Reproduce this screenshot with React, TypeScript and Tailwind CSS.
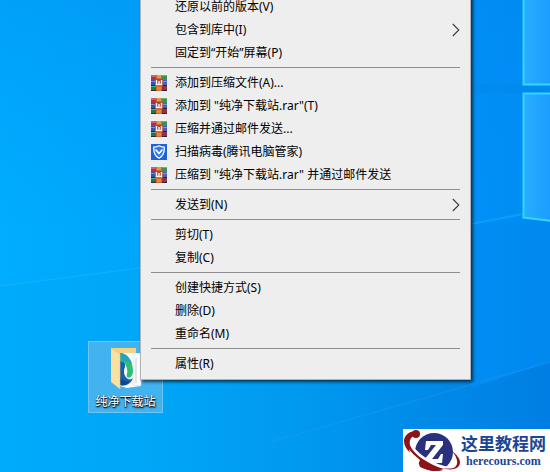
import type { ReactNode } from "react";

function RarIcon() {
  return (
    <svg viewBox="0 0 16 16" className="h-4 w-4" aria-hidden="true">
      <rect width="16" height="16" fill="#2f2438" />
      <rect width="8" height="5" fill="#b32f45" />
      <rect x="8" width="8" height="5" fill="#3f8f52" />
      <rect width="8" height="2" fill="#cf6072" />
      <rect x="8" width="8" height="1" fill="#6fb27c" />
      <rect y="5" width="8" height="5" fill="#3a4fae" />
      <rect x="8" y="5" width="8" height="5" fill="#4a5fc6" />
      <rect y="6" width="16" height="1" fill="#7d8edb" />
      <rect y="11" width="8" height="4" fill="#1f7a45" />
      <rect x="8" y="11" width="8" height="4" fill="#8e3440" />
      <rect y="11" width="5" height="1" fill="#5cae78" />
      <rect x="5" width="6" height="16" fill="#cf6630" />
      <rect x="6" width="4" height="3" fill="#e59a48" />
      <rect x="6" y="12" width="4" height="3" fill="#e08a3c" />
      <rect x="4" y="4" width="8" height="7" fill="#a8483f" />
      <path d="M5.500 5v4.500h5V5M8 6v3" fill="none" stroke="#fff3ea" strokeWidth="1.400" />
    </svg>
  );
}

function ShieldIcon() {
  return (
    <svg viewBox="0 0 16 16" className="h-4 w-4" aria-hidden="true">
      <rect width="16" height="16" fill="#1d62db" />
      <path
        d="M8 1.700c1.600 1 3.400 1.400 5.300 1.500.3 5-.9 8.600-5.300 11.100C3.600 11.800 2.400 8.200 2.700 3.200 4.600 3.100 6.400 2.700 8 1.700z"
        fill="#2d78ee"
        stroke="#fff"
        strokeWidth="1.300"
      />
      <path d="M4.500 5.500l3.500 4 3.500-4" fill="none" stroke="#fff" strokeWidth="1.700" />
    </svg>
  );
}

function Chevron() {
  return (
    <svg viewBox="0 0 8 14" className="ml-auto h-3.5 w-2" fill="none" stroke="#3c3c3c" aria-hidden="true">
      <path d="M.8 1l6 6-6 6" strokeWidth="1.100" />
    </svg>
  );
}

function Item({ label, icon, submenu = false }: { label: string; icon?: ReactNode; submenu?: boolean }) {
  return (
    <button
      type="button"
      role="menuitem"
      aria-haspopup={submenu ? "menu" : undefined}
      className="flex h-[23px] w-full items-center text-left hover:bg-white"
    >
      <span className="w-6 shrink-0">{icon}</span>
      <span className="whitespace-pre">{label}</span>
      {submenu && <Chevron />}
    </button>
  );
}

function Separator() {
  return <div role="separator" className="my-[3px] h-px bg-[#8f8f8f]" />;
}

function Wallpaper() {
  return (
    <svg viewBox="0 0 550 472" preserveAspectRatio="xMaxYMin slice" className="absolute inset-0 h-full w-full" aria-hidden="true">
      <defs>
        <linearGradient id="sky" x1="0" y1="0" x2="1" y2="0">
          <stop offset="0" stopColor="#00adfe" />
          <stop offset=".28" stopColor="#00a5fa" />
          <stop offset=".9" stopColor="#008ff6" />
          <stop offset="1" stopColor="#008cf3" />
        </linearGradient>
        <linearGradient id="top" x1="0" y1="0" x2="0" y2="1">
          <stop offset="0" stopColor="#0084ee" stopOpacity=".3" />
          <stop offset=".5" stopColor="#0090f8" stopOpacity="0" />
        </linearGradient>
        <linearGradient id="ground" x1="0" y1="0" x2="1" y2="0">
          <stop offset="0" stopColor="#00abfb" />
          <stop offset=".3" stopColor="#00a5f6" />
          <stop offset=".55" stopColor="#0099f0" />
          <stop offset=".8" stopColor="#0089e8" />
          <stop offset="1" stopColor="#007ee3" />
        </linearGradient>
        <linearGradient id="pane" x1="0" y1="0" x2="1" y2="0">
          <stop offset="0" stopColor="#29adff" />
          <stop offset="1" stopColor="#1a9cff" />
        </linearGradient>
      </defs>
      <rect width="550" height="472" fill="url(#sky)" />
      <rect width="550" height="472" fill="url(#top)" />
      <path d="M0 286L140 268" stroke="#2fbdff" opacity=".45" />
      <path d="M471 224L523 214" stroke="#2db4ff" strokeWidth="2" opacity=".35" />
      <path d="M471 225L550 218V362L471 388z" fill="#0088ec" opacity=".35" />
      <path d="M0 472V287L140 269V380H471V388L550 362V472z" fill="url(#ground)" />
      <path d="M270 442L400 405 550 362" fill="none" stroke="#2a9cf2" opacity=".45" />
      <rect x="471" y="84" width="79" height="9" fill="#0088ed" opacity=".6" />
      <path d="M523.500-2V84.500H552V-2z" fill="url(#pane)" stroke="#35d5fa" strokeWidth="2" />
      <path d="M523.500 93.500H552V221L523.500 217.500z" fill="url(#pane)" stroke="#35d5fa" strokeWidth="2" />
    </svg>
  );
}

function FolderIcon() {
  return (
    <svg viewBox="0 0 48 48" className="h-12 w-12" aria-hidden="true">
      <path d="M9 4h25v36H14z" fill="#f3d283" />
      <path d="M18 9h21v33l-14 2-7-2z" fill="#f7fafc" />
      <path d="M32 10h7v31l-7 1z" fill="#fff" stroke="#d3dae0" strokeWidth=".6" />
      <path d="M34 14v25" stroke="#a9b5bf" strokeWidth=".7" />
      <path d="M18 9c8 0 13 9 13 18 0 5-3 8-6 6-1-2 1-4 0-8-1-5-3-8-7-8z" fill="#2fbf74" />
      <path d="M18 9c6 0 10 5 12 11-3-3-7-4-12-3z" fill="#22a5b8" />
      <path d="M18 17c4 0 6 3 5 6-2 4-1 10 3 12 2 1 4 0 5-1-2 6-8 9-13 7z" fill="#1560ae" />
      <path d="M18 32c2 5 6 6 10 5-3 4-7 5-10 4z" fill="#12478f" />
      <path d="M9 4l9 6v35l-9-7z" fill="#fbe0a0" />
      <path d="M9 4l9 6v35" fill="none" stroke="#e8c673" strokeWidth=".6" />
    </svg>
  );
}

function SiteLogo() {
  return (
    <svg viewBox="0 0 58 43" className="h-[43px] w-[58px] shrink-0" aria-hidden="true">
      <circle cx="31" cy="23" r="19" fill="#29317f" />
      <path d="M23 12h17v4L29 30h6l3-5h2l-1 9H21v-3l12-15h-5l-3 5h-3z" fill="#fff" />
      <path d="M7 17c7 9 20 19 38 23" fill="none" stroke="#fff" strokeWidth="4" />
      <path d="M14 6C8 7 6 11 7 16c3 9 18 19 34 24-9 2-17 1-24-2l-3-9C6 24 1 18 1 12 1 6 7 2 13 2z" fill="#8f1216" />
      <path d="M7 18c2 5 5 9 9 12 7 6 15 9 24 11-6 2-17 1-23-4 3-3-7-9-10-19z" fill="#8f1216" />
      <path d="M6 20c1 6 5 12 9 16l2-5C12 27 8 23 6 20z" fill="#fff" />
      <circle cx="13" cy="5" r="4" fill="#8f1216" />
      <path d="M49 22c8 6 10 12 6 16-3 3-10 3-17 1 8 1 13 1 15-2 3-4 0-10-4-15z" fill="#8f1216" />
    </svg>
  );
}

export default function App() {
  return (
    <main className="relative min-h-screen overflow-hidden bg-[#00a2f8] font-['Noto_Sans','Noto_Sans_CJK_SC',sans-serif] text-xs">
      <Wallpaper />

      <button
        type="button"
        className="absolute left-[88px] top-[341px] flex h-[72px] w-[75px] flex-col items-center border border-[#6cc7f8] bg-[#42b3ef] pt-0.5 text-white"
      >
        <FolderIcon />
        <span className="leading-5 [text-shadow:1px_1px_2px_#000,0_1px_1px_#000]">纯净下载站</span>
      </button>

      <div
        role="menu"
        aria-label="文件夹"
        className="absolute -top-1.5 left-[140px] w-[331px] border border-[#b0b4b8] bg-[#eeeeee] px-2.5 pb-1 text-black shadow-[2px_2px_3px_rgba(0,0,0,0.65)]"
      >
        <Item label="还原以前的版本(V)" />
        <Item label="包含到库中(I)" submenu />
        <Item label="固定到“开始”屏幕(P)" />
        <Separator />
        <Item label="添加到压缩文件(A)..." icon={<RarIcon />} />
        <Item label={'添加到 "纯净下载站.rar"(T)'} icon={<RarIcon />} />
        <Item label="压缩并通过邮件发送..." icon={<RarIcon />} />
        <Item label="扫描病毒(腾讯电脑管家)" icon={<ShieldIcon />} />
        <Item label={'压缩到 "纯净下载站.rar" 并通过邮件发送'} icon={<RarIcon />} />
        <Separator />
        <Item label="发送到(N)" submenu />
        <Separator />
        <Item label="剪切(T)" />
        <Item label="复制(C)" />
        <Separator />
        <Item label="创建快捷方式(S)" />
        <Item label="删除(D)" />
        <Item label="重命名(M)" />
        <Separator />
        <Item label="属性(R)" />
      </div>

      <div className="absolute bottom-0 right-0 flex h-[43px] w-[147px] items-center bg-white text-[#1b4694]">
        <SiteLogo />
        <div className="flex flex-col items-center">
          <span className="whitespace-nowrap font-['Noto_Sans_CJK_SC',sans-serif] text-[17px] font-bold leading-5">这里教程网</span>
          <span className="font-['Liberation_Serif',serif] text-xs font-bold leading-4">herecours.com</span>
        </div>
      </div>
    </main>
  );
}
